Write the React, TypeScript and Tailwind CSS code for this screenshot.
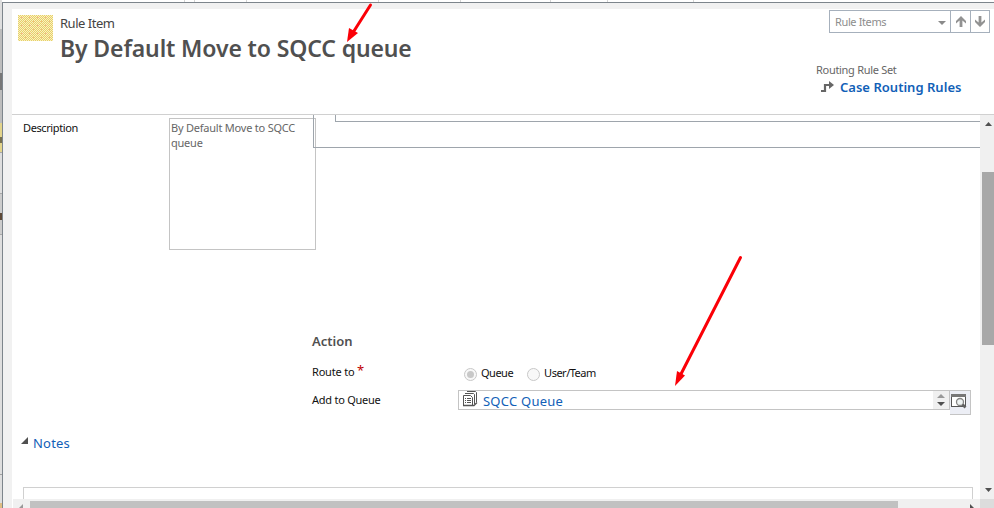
import React from "react";

const NAV_ICON_UP = "M5 0 L10 5 V7.5 L6.4 4.6 V11 H3.6 V4.6 L0 7.5 V5 Z";

function UnderlyingPage() {
  return (
    <div className="flex w-[2px] shrink-0 flex-col overflow-hidden">
      <div className="h-[29px] bg-[#dedede]" />
      <div className="h-[44px] bg-[#bdbdbd]" />
      <div className="h-[17px] bg-[#777777]" />
      <div className="h-[33px] bg-[#bdbdbd]" />
      <div className="flex h-[29px] items-center bg-[#e3d48b]">
        <div className="mt-1 h-[6px] w-[2px] bg-[#77704e]" />
      </div>
      <div className="h-[42px] border-y border-[#a8a8a8] bg-[#dedede]" />
      <div className="flex h-[41px] items-center border-b border-[#a8a8a8] bg-[#cccccc]">
        <div className="mt-1 h-[7px] w-[2px] bg-[#5d4937]" />
      </div>
      <div className="h-[240px] border-b border-[#a0a0a0] bg-[#dedede]" />
      <div className="h-[28px] bg-[#dedede]" />
      <div className="flex-1 bg-[#dfbd82]" />
    </div>
  );
}

function TopStrip() {
  return (
    <div className="flex h-[2px] shrink-0 bg-white">
      <div className="w-[183px] border-r border-[#d5d5d5]" />
      <div className="w-[10px] border-r border-[#d5d5d5]" />
      <div className="w-[52px] border-r border-[#d5d5d5]" />
      <div className="w-[132px] border-r border-[#d5d5d5]" />
      <div className="w-[82px] border-r border-[#d5d5d5]" />
      <div className="w-[90px] border-r border-[#d5d5d5]" />
      <div className="w-[57px] border-r border-[#d5d5d5]" />
      <div className="w-[86px] border-r border-[#d5d5d5]" />
    </div>
  );
}

function RecordNavigator() {
  return (
    <div className="flex h-[23px] w-[161px] border border-[#a6b0bc]">
      <div className="flex flex-1 items-center justify-between pr-[4px] pl-[5px] text-[#8d8d8d]">
        <span className="text-[11px] leading-[15px] tracking-[-0.38px]">Rule Items</span>
        <svg width="8" height="4" viewBox="0 0 8 4" className="mt-[2px]">
          <path d="M0 0 H8 L4 4 Z" fill="#8a8a8a" />
        </svg>
      </div>
      <div className="flex w-[20px] items-center justify-center border-l border-[#a6b0bc]">
        <svg width="10" height="11" viewBox="0 0 10 11">
          <path d={NAV_ICON_UP} fill="#929292" />
        </svg>
      </div>
      <div className="flex w-[19px] items-center justify-center border-l border-[#a6b0bc]">
        <svg width="10" height="11" viewBox="0 0 10 11" className="rotate-180">
          <path d={NAV_ICON_UP} fill="#929292" />
        </svg>
      </div>
    </div>
  );
}

function Header() {
  return (
    <header className="flex h-[105px] shrink-0 justify-between pl-[6px]">
      <div className="flex pt-[6px]">
        <svg width="35" height="26" className="shrink-0" shapeRendering="crispEdges">
          <defs>
            <pattern id="weave" width="2" height="2" patternUnits="userSpaceOnUse">
              <rect width="2" height="2" fill="#fbf2bf" />
              <rect width="1" height="1" fill="#e6cf6c" />
              <rect x="1" y="1" width="1" height="1" fill="#e6cf6c" />
            </pattern>
            <pattern id="dots" width="8" height="8" patternUnits="userSpaceOnUse">
              <rect x="3" y="2" width="2" height="1" fill="#f4b98a" />
              <rect x="7" y="6" width="1" height="1" fill="#f4b98a" />
            </pattern>
          </defs>
          <rect width="35" height="26" fill="url(#weave)" />
          <rect width="35" height="26" fill="url(#dots)" />
        </svg>
        <div className="pl-[7px]">
          <div className="-mt-px text-[13px] leading-[18px] tracking-[-0.48px] whitespace-nowrap text-[#444444]">Rule Item</div>
          <h1 className="text-[23px] leading-[32px] font-semibold tracking-[-0.13px] whitespace-nowrap text-[#505050]">
            By Default Move to SQCC queue
          </h1>
        </div>
      </div>
      <div className="flex w-[178px] flex-col">
        <div className="pt-px pl-[13px]">
          <RecordNavigator />
        </div>
        <div className="mt-[29px] text-[11px] leading-[15px] tracking-[-0.3px] text-[#666666]">Routing Rule Set</div>
        <div className="flex items-center pt-px pl-[5px]">
          <svg width="13" height="12" viewBox="0 0 13 12" className="mb-px">
            <path d="M0 10 H4 V4 H8" fill="none" stroke="#666" strokeWidth="2.2" />
            <path d="M8 0 L13 4 L8 8 Z" fill="#666" />
          </svg>
          <a className="pl-[6px] text-[13px] leading-[19px] font-semibold tracking-[0.02px] whitespace-nowrap text-[#1160b7]">Case Routing Rules</a>
        </div>
      </div>
    </header>
  );
}

function QueueIcon() {
  return (
    <svg width="15" height="17" viewBox="0 0 15 17" fill="none" stroke="#555" strokeWidth="1">
      <path d="M4 1.5 H12.5 L13.5 2.5 V12" />
      <path d="M2 3.5 H10.5 L11.5 4.5 V14" />
      <path d="M0.5 15.5 V5.5 H7.5 L9.5 7.5 V15.5" />
      <path d="M2 8.5 H3 M4 8.5 H8 M2 10.5 H3 M4 10.5 H8 M2 12.5 H3 M4 12.5 H8" />
      <path d="M0 15.5 H11 L14 12.5" strokeWidth="1.3" />
    </svg>
  );
}

function LookupIcon() {
  return (
    <svg width="17" height="16" viewBox="0 0 17 16">
      <rect x="0.5" y="0.5" width="14" height="12" fill="#fff" stroke="#555" />
      <rect x="0" y="0" width="15" height="3" fill="#777" />
      <circle cx="9" cy="8" r="3.5" fill="#eef3f3" stroke="#858585" strokeWidth="1.3" />
      <path d="M11.5 10.5 L14.5 13.5" stroke="#626262" strokeWidth="2.6" />
    </svg>
  );
}

function LookupField() {
  return (
    <div className="flex h-[25px] w-[513px] items-start">
      <div className="flex h-[20px] w-[492px] items-center border border-[#c4c4c4] bg-white">
        <div className="pb-[3px] pl-[4px]"><QueueIcon /></div>
        <a className="flex-1 pt-px pl-[5px] text-[13px] leading-[18px] tracking-[0.23px] text-[#1160b7]">SQCC Queue</a>
        <div className="flex h-full w-[16px] flex-col items-center justify-center gap-[4px] bg-[#f0f0f0]">
          <svg width="8" height="4"><path d="M0 4 L4 0 L8 4 Z" fill="#999" /></svg>
          <svg width="8" height="4"><path d="M0 0 H8 L4 4 Z" fill="#505050" /></svg>
        </div>
      </div>
      <div className="h-[25px] w-[21px] shrink-0 border-t border-r border-b border-[#c4c4c4] bg-[#eceef5] pt-[3px] pl-[1px]">
        <LookupIcon />
      </div>
    </div>
  );
}

function Radio({ label, checked }: { label: string; checked?: boolean }) {
  return (
    <div className="flex items-center">
      <span className="mt-[3px] flex size-[13px] items-center justify-center rounded-full border border-[#c8c8c8] bg-[#f8f8f8]">
        {checked && <span className="size-[7px] rounded-full bg-[#c8c8c8]" />}
      </span>
      <span className="pl-[4px] text-[11px] leading-[15px] tracking-[-0.5px]">{label}</span>
    </div>
  );
}

function Form() {
  return (
    <main className="relative flex w-[968px] shrink-0 flex-col overflow-hidden text-[11px] text-[#111111]">
      <div className="flex h-[241px] shrink-0 pt-[3px] pl-[11px]">
        <div className="w-[146px] pt-[2px] leading-[15px] tracking-[-0.4px]">Description</div>
        <div className="h-[132px] w-[147px] border border-[#c4c4c4] pt-px pl-[1px] leading-[15px] tracking-[-0.22px] text-[#666666]">
          By Default Move to SQCC queue
        </div>
      </div>
      <div className="absolute top-0 left-[301px] h-[33px] w-[680px] border-b border-l border-[#9ea5ac]" />
      <div className="absolute top-0 left-[323px] h-[7px] w-[680px] border-b border-l border-[#9ea5ac]" />

      <section className="shrink-0 pl-[300px]">
        <h2 className="text-[13px] leading-[18px] font-semibold text-[#505050] -mt-[24px] pt-[0px]">Action</h2>
        <div className="mt-[14px] flex h-[16px]">
          <div className="w-[152px] leading-[15px] tracking-[-0.2px]">
            Route to <span className="relative -top-px text-[13px] leading-none text-[#c00000]">*</span>
          </div>
          <div className="flex gap-[14px] pt-[1px]">
            <Radio label="Queue" checked />
            <Radio label="User/Team" />
          </div>
        </div>
        <div className="mt-[10px] flex">
          <div className="w-[146px] pt-[2px] leading-[15px] tracking-[-0.25px]">Add to Queue</div>
          <LookupField />
        </div>
      </section>

      <section className="shrink-0 pt-[19px]">
        <div className="flex items-center pl-[9px]">
          <svg width="7" height="7" className="mb-[5px]"><path d="M7 0 V7 H0 Z" fill="#505050" /></svg>
          <h2 className="pl-[5px] text-[13px] leading-[18px] tracking-[0.2px] text-[#1160b7]">Notes</h2>
        </div>
        <div className="mt-[35px] ml-[11px] h-[40px] w-[950px] border border-[#d0d0d0]" />
      </section>
    </main>
  );
}

function VerticalScrollbar() {
  return (
    <div className="flex w-[14px] flex-col items-end bg-[#f0f0f0]">
      <div className="flex h-[57px] w-[12px] justify-center pt-[7px]">
        <svg width="7" height="4"><path d="M0 4 L3.5 0 L7 4 Z" fill="#505050" /></svg>
      </div>
      <div className="h-[173px] w-[12px] bg-[#a8a8a8]" />
      <div className="flex w-[12px] flex-1 items-end justify-center pb-[7px]">
        <svg width="7" height="4"><path d="M0 0 H7 L3.5 4 Z" fill="#505050" /></svg>
      </div>
    </div>
  );
}

function HorizontalScrollbar() {
  return (
    <div className="ml-px flex h-[9px] shrink-0 bg-[#f0f0f0]">
      <div className="w-[17px] pt-[5px] pl-[6px]">
        <svg width="4" height="4"><path d="M4 0 V4 H0 Z" fill="#999" /></svg>
      </div>
      <div className="mt-[2px] h-[7px] w-[868px] bg-[#c1c1c1]" />
      <div className="flex-1 pt-[5px] pl-[72px]">
        <svg width="4" height="4"><path d="M0 0 L4 4 H0 Z" fill="#505050" /></svg>
      </div>
      <div className="w-[14px] bg-[#dcdcdc]" />
    </div>
  );
}

function Arrows() {
  return (
    <svg width="994" height="508" className="pointer-events-none absolute inset-0">
      <g stroke="#fb0007" strokeLinecap="round" strokeWidth="3" fill="#fb0007">
        <path d="M370.5 5 L354 31" />
        <path d="M347 42 L349 28 L358 33 Z" stroke="none" />
        <path d="M740.5 257.5 L681 374" />
        <path d="M675 386 L677 371 L685 375.5 Z" stroke="none" />
      </g>
    </svg>
  );
}

export default function App() {
  return (
    <div className="relative flex h-[508px] w-[994px] overflow-hidden bg-white font-['Noto_Sans','Open_Sans',sans-serif]">
      <UnderlyingPage />
      <div className="flex min-w-0 flex-1 flex-col">
        <TopStrip />
        <div className="flex min-h-0 flex-1 flex-col border-t border-l border-[#7d858c] bg-[#f1f1f1] pt-[6px] pl-[9px]">
          <div className="flex min-h-0 flex-1 flex-col bg-white">
            <Header />
            <div className="flex min-h-0 flex-1 flex-col border-t border-[#d0d0d0]">
              <div className="flex min-h-0 flex-1">
                <Form />
                <VerticalScrollbar />
              </div>
              <HorizontalScrollbar />
            </div>
          </div>
        </div>
      </div>
      <Arrows />
    </div>
  );
}
